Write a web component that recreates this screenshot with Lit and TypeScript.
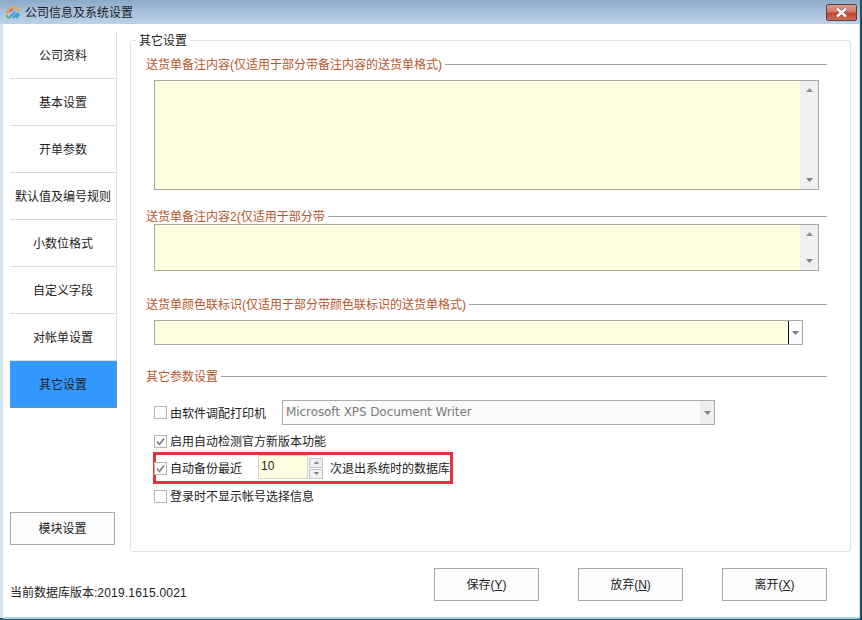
import { LitElement, html, css, svg } from "lit";
import { customElement } from "lit/decorators.js";

const NAV = ["公司资料", "基本设置", "开单参数", "默认值及编号规则", "小数位格式", "自定义字段", "对帐单设置", "其它设置"];

const up = svg`<path d="M1 5 L4.5 1 L8 5 Z" fill="#8f8f8f"/>`;
const down = svg`<path d="M1 1 L8 1 L4.5 5 Z" fill="#7f7f7f"/>`;
const arrowUp = html`<svg class="arr" width="9" height="6" viewBox="0 0 9 6">${up}</svg>`;
const arrowDown = html`<svg class="arr" width="9" height="6" viewBox="0 0 9 6">${down}</svg>`;
const tick = html`<svg width="11" height="11" viewBox="0 0 11 11"><path d="M2 5.5 L4.5 8.5 L9 2.5" fill="none" stroke="#808080" stroke-width="1.7"/></svg>`;

@customElement("app-root")
export class AppRoot extends LitElement {
  static styles = css`
    :host { display: block; width: 862px; height: 620px; overflow: hidden;
      font: 12px/16px "Liberation Sans", "Noto Sans CJK SC", sans-serif; color: #222; }
    * { box-sizing: border-box; }
    .win { width: 862px; height: 620px; display: flex; flex-direction: column;
      background: #d3e3f0; border-right: 2px solid #1d4f66; border-bottom: 2px solid #1d5a70; white-space: nowrap; }
    .title { height: 24px; flex: none; display: flex; align-items: center; padding-left: 6px; gap: 4px;
      background: linear-gradient(180deg, #8ba9c9 0%, #a5bfdb 45%, #bcd2e8 100%); color: #1c1c1c; position: relative; }
    .title span { padding-top: 2px; }
    .close { position: absolute; left: 826px; top: 4px; width: 31px; height: 17px; border: 1px solid #5b4044; border-radius: 2px;
      background: linear-gradient(180deg, #dc9d92 0%, #d27a69 45%, #c2422b 55%, #d06c58 100%);
      display: flex; align-items: center; justify-content: center; }
    .client { flex: 1; margin: 0 1px 1px 3px; background: #fff; display: flex; flex-direction: column; box-shadow: 0 2px 0 #a9d4e0; }
    .main { display: flex; height: 528px; flex: none; }
    .side { width: 114px; flex: none; padding: 8px 0 7px 7px; display: flex; flex-direction: column; }
    .nav { height: 47px; width: 107px; display: flex; align-items: center; justify-content: center;
      border-bottom: 1px solid #dcdcdc; border-right: 1px solid #e2e2e2; flex: none; padding-top: 1px; }
    .nav.on { background: #3399ff; border-bottom: 1px solid #6f93b8; border-right: 1px solid #6f93b8; }
    .mod { margin-top: auto; width: 105px; height: 33px; }
    .btn { border: 1px solid #a9a9a9; background: #fcfcfc; display: flex; align-items: center; justify-content: center; flex: none; }
    .btn u { text-underline-offset: 1px; }
    .panel { margin-left: 13px; margin-top: 16px; width: 721px; height: 512px; border: 1px solid #dde1e6; border-radius: 3px;
      padding: 15px 23px 0 15px; position: relative; display: flex; flex-direction: column; }
    .legend { position: absolute; left: 5px; top: -8px; background: #fff; padding: 0 3px; }
    .head { height: 16px; display: flex; align-items: center; gap: 3px; color: #b5562a; flex: none; }
    .head span { padding-top: 2px; }
    .head::after { content: ""; flex: 1; height: 1px; background: #a3a3a3; }
    .h2 { margin-top: 18px; } .h3 { margin-top: 25px; } .h4 { margin-top: 23px; }
    .area { margin-left: 8px; width: 665px; flex: none; border: 1px solid #a9a9a0; background: #ffffe1; display: flex; justify-content: flex-end; }
    .a1 { margin-top: 8px; height: 110px; } .a2 { height: 47px; }
    .sb { width: 18px; background: #f0f0f0; display: flex; flex-direction: column; align-items: center; justify-content: space-between; padding: 6px 0; }
    .combo { margin: 8px 0 0 8px; width: 649px; height: 25px; flex: none; border: 1px solid #a9a9a0; background: #ffffe1; display: flex; justify-content: flex-end; }
    .cbtn { width: 14px; background: #fbfbfb; border-left: 1px solid #111; display: flex; align-items: center; justify-content: center; }
    .row { display: flex; align-items: center; flex: none; margin-left: 8px; height: 16px; }
    .row > span { padding-top: 2px; }
    .r1 { margin-top: 16px; height: 25px; } .r2 { margin-top: 8px; }
    .r3 { margin: 3px 0 0 7px; width: 300px; height: 32px; border: 3px solid #e2343c; }
    .r3 .cb { margin-left: -2px; }
    .r4 { margin-top: 4px; }
    .cb { width: 13px; height: 13px; border: 1px solid #b5b5b5; background: #fff; margin-right: 3px; flex: none; display: flex; align-items: center; justify-content: center; }
    .sel { margin-left: 16px; width: 433px; height: 25px; border: 1px solid #ababab; background: #fbfbfb; display: flex; align-items: center; justify-content: space-between; }
    .sel span { padding: 0 0 1px 3px; color: #7a7a7a; font-family: "DejaVu Sans", sans-serif; letter-spacing: -0.08px; }
    .selb { width: 14px; height: 23px; background: #efefef; display: flex; align-items: center; justify-content: center; }
    .spin { margin-left: 16px; width: 50px; height: 24px; border: 1px solid #d5d5c8; background: #ffffe1; padding: 2px 0 0 2px; flex: none; margin-top: -3px; color: #222; }
    .sbs { margin-left: 1px; width: 14px; display: flex; flex-direction: column; gap: 1px; margin-right: 7px; flex: none; }
    .sbs div { height: 10px; border: 1px solid #c4c4c4; background: #f0f0f0; display: flex; align-items: center; justify-content: center; }
    .sbs svg { width: 7px; height: 5px; }
    .foot { display: flex; padding: 16px 32px 0 7px; }
    .ver { margin-top: 17px; flex: 1; }
    .ver b { font-weight: normal; letter-spacing: 0.2px; }
    .act { width: 105px; height: 33px; margin-left: 39px; }
  `;

  private check(on: boolean) {
    return html`<div class="cb">${on ? tick : ""}</div>`;
  }

  render() {
    return html`<div class="win">
      <div class="title">
        <svg width="15" height="14" viewBox="0 0 15 14">
          <path d="M1.5 9 A6 6 0 0 1 13 6" fill="none" stroke="#e8a33a" stroke-width="2"/>
          <path d="M3.5 7 A4 4 0 0 1 7 4.5" fill="none" stroke="#d9534a" stroke-width="1.6"/>
          <path d="M4 12 L9 7 M7 13 L12 8 M10 13 L13.5 9.5" stroke="#2e9fd0" stroke-width="1.8"/>
          <path d="M1 10 Q1 13 4 13" fill="none" stroke="#5aaa55" stroke-width="1.5"/>
        </svg>
        <span>公司信息及系统设置</span>
        <div class="close">
          <svg width="15" height="11" viewBox="0 0 15 11">
            <path d="M3 1.5 L12 9.5 M12 1.5 L3 9.5" stroke="#6b4a4a" stroke-width="3.6"/>
            <path d="M3 1.5 L12 9.5 M12 1.5 L3 9.5" stroke="#fff" stroke-width="2.4"/>
          </svg>
        </div>
      </div>
      <div class="client">
        <div class="main">
          <div class="side">
            ${NAV.map((n, i) => html`<div class="nav ${i === 7 ? "on" : ""}">${n}</div>`)}
            <div class="btn mod">模块设置</div>
          </div>
          <div class="panel">
            <div class="legend">其它设置</div>
            <div class="head"><span>送货单备注内容(仅适用于部分带备注内容的送货单格式)</span></div>
            <div class="area a1"><div class="sb">${arrowUp}${arrowDown}</div></div>
            <div class="head h2"><span>送货单备注内容2(仅适用于部分带</span></div>
            <div class="area a2"><div class="sb">${arrowUp}${arrowDown}</div></div>
            <div class="head h3"><span>送货单颜色联标识(仅适用于部分带颜色联标识的送货单格式)</span></div>
            <div class="combo"><div class="cbtn">${arrowDown}</div></div>
            <div class="head h4"><span>其它参数设置</span></div>
            <div class="row r1">${this.check(false)}<span>由软件调配打印机</span>
              <div class="sel"><span>Microsoft XPS Document Writer</span><div class="selb">${arrowDown}</div></div>
            </div>
            <div class="row r2">${this.check(true)}<span>启用自动检测官方新版本功能</span></div>
            <div class="row r3">${this.check(true)}<span>自动备份最近</span>
              <div class="spin">10</div>
              <div class="sbs"><div>${arrowUp}</div><div>${arrowDown}</div></div>
              <span>次退出系统时的数据库</span>
            </div>
            <div class="row r4">${this.check(false)}<span>登录时不显示帐号选择信息</span></div>
          </div>
        </div>
        <div class="foot">
          <div class="ver">当前数据库版本:<b>2019.1615.0021</b></div>
          <div class="btn act">保存(<u>Y</u>)</div>
          <div class="btn act">放弃(<u>N</u>)</div>
          <div class="btn act">离开(<u>X</u>)</div>
        </div>
      </div>
    </div>`;
  }
}
